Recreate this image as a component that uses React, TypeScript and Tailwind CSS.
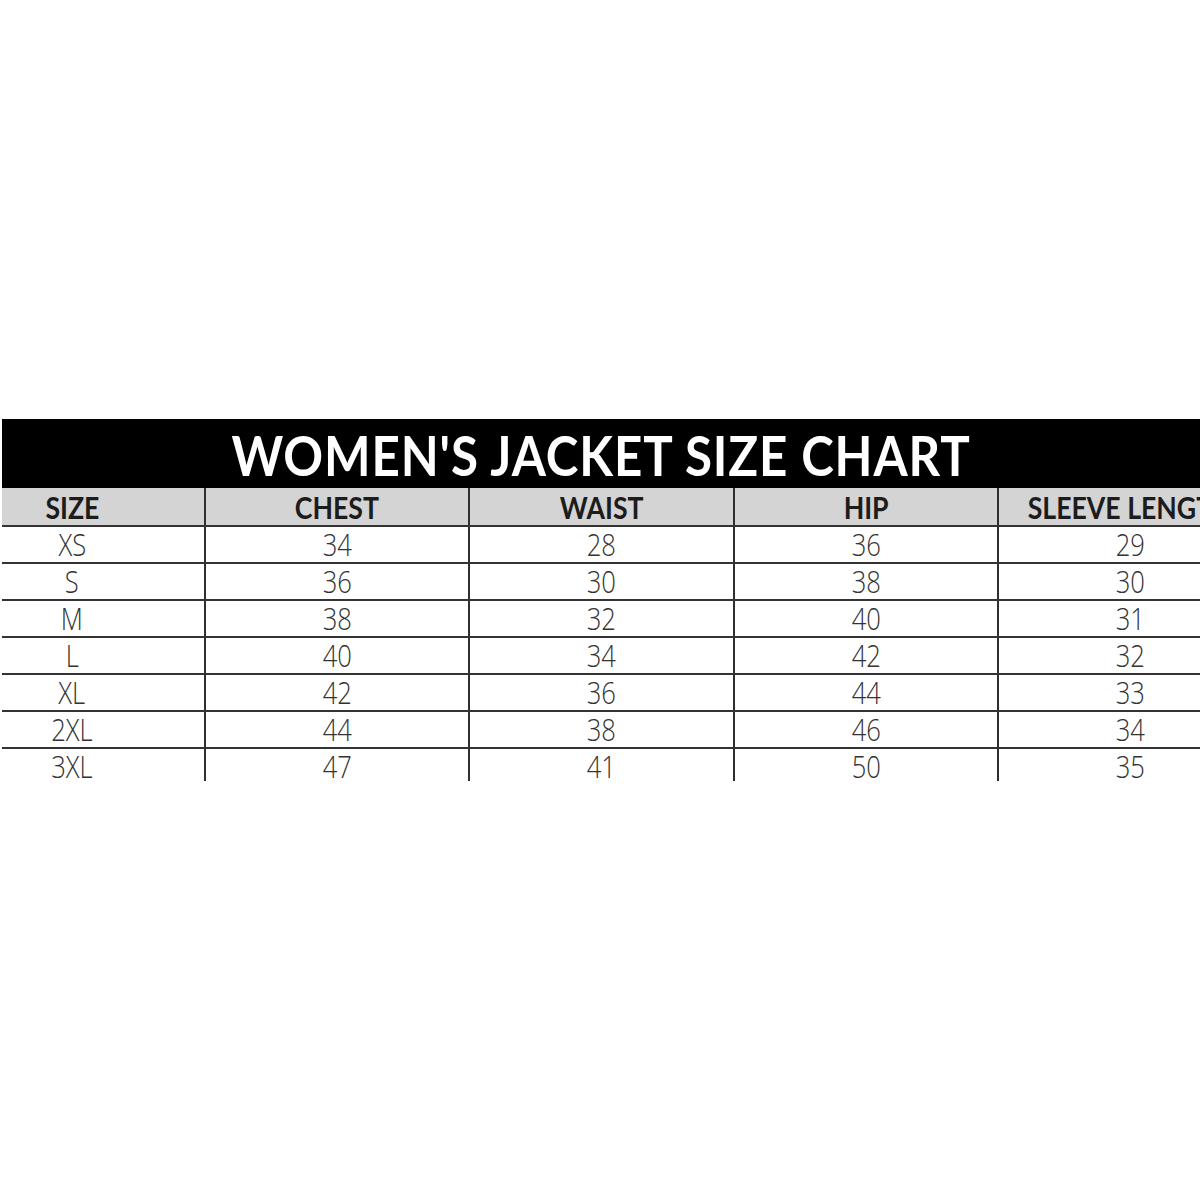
import React from "react";

const cols = ["SIZE", "CHEST", "WAIST", "HIP", "SLEEVE LENGTH"];
const rows = [
  ["XS", "34", "28", "36", "29"],
  ["S", "36", "30", "38", "30"],
  ["M", "38", "32", "40", "31"],
  ["L", "40", "34", "42", "32"],
  ["XL", "42", "36", "44", "33"],
  ["2XL", "44", "38", "46", "34"],
  ["3XL", "47", "41", "50", "35"],
];

export default function App() {
  return (
    <div className="w-[1200px] h-[1200px] bg-white overflow-hidden">
      <div className="pt-[419px] pl-[2px]">
        <div className="overflow-hidden">
          <div className="-ml-[62px] w-[1322px]">
            <div className="h-[69px] bg-black flex items-center justify-center">
              <span
                className="text-white font-bold text-[56px] leading-none tracking-[1px] pt-[2px] scale-x-[0.88] inline-block whitespace-nowrap"
                style={{ fontFamily: "'Lato', 'Open Sans', sans-serif" }}
              >
                WOMEN'S JACKET SIZE CHART
              </span>
            </div>
            <div className="grid grid-cols-[264px_264px_265px_264px_265px] h-[37px] bg-[#d4d4d4]">
              {cols.map((c, i) => (
                <div
                  key={c}
                  className={`flex items-end justify-center pb-[2px] ${i > 0 ? "border-l-2 border-[#2e2e2e]" : ""}`}
                >
                  <span
                    className="font-bold text-[31px] leading-none text-[#1c1c1c] whitespace-nowrap scale-x-[0.86] inline-block"
                    style={{ fontFamily: "'Lato', 'Open Sans', sans-serif" }}
                  >
                    {c}
                  </span>
                </div>
              ))}
            </div>
            {rows.map((r, ri) => (
              <div
                key={r[0]}
                className={`grid grid-cols-[264px_264px_265px_264px_265px] border-t-2 border-[#333333] ${ri === rows.length - 1 ? "h-[34px]" : "h-[37px]"}`}
              >
                {r.map((v, i) => (
                  <div
                    key={i}
                    className={`flex items-start justify-center pt-[1px] ${i > 0 ? "border-l-2 border-[#2e2e2e]" : ""}`}
                  >
                    <span
                      className="font-light text-[32px] leading-none text-[#333333] scale-x-[0.8] inline-block"
                      style={{ fontFamily: "'Open Sans', 'Lato', sans-serif" }}
                    >
                      {v}
                    </span>
                  </div>
                ))}
              </div>
            ))}
          </div>
        </div>
      </div>
    </div>
  );
}
